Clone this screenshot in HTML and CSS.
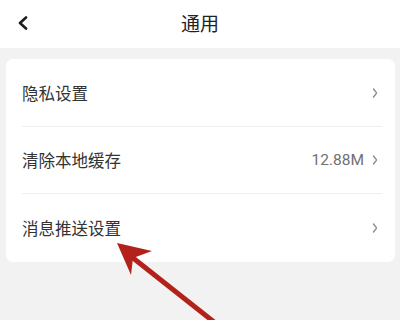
FILE: index.html
```html
<!DOCTYPE html>
<html lang="zh">
<head>
<meta charset="utf-8">
<link rel="stylesheet" href="styles.css">
</head>
<body>
<div class="page">
  <header class="topbar">
    <svg class="back" width="12" height="14" viewBox="0 0 12 14"><path d="M9 1.5 L3 7 L9 12.5" fill="none" stroke="#1e1e1e" stroke-width="2.6" stroke-linecap="round" stroke-linejoin="round"/></svg>
    <div class="title">通用</div>
  </header>
  <main class="content">
    <div class="card">
      <div class="row">
        <span class="label">隐私设置</span>
        <span class="right"><svg class="chev" width="6" height="10" viewBox="0 0 6 10"><path d="M1.5 1 Q4.5 4.5 4.5 5 Q4.5 5.5 1.5 9" fill="none" stroke="#8a8a8a" stroke-width="1.4" stroke-linecap="round"/></svg></span>
      </div>
      <div class="row">
        <span class="label">清除本地缓存</span>
        <span class="right"><span class="value">12.88M</span><svg class="chev" width="6" height="10" viewBox="0 0 6 10"><path d="M1.5 1 Q4.5 4.5 4.5 5 Q4.5 5.5 1.5 9" fill="none" stroke="#8a8a8a" stroke-width="1.4" stroke-linecap="round"/></svg></span>
      </div>
      <div class="row">
        <span class="label">消息推送设置</span>
        <span class="right"><svg class="chev" width="6" height="10" viewBox="0 0 6 10"><path d="M1.5 1 Q4.5 4.5 4.5 5 Q4.5 5.5 1.5 9" fill="none" stroke="#8a8a8a" stroke-width="1.4" stroke-linecap="round"/></svg></span>
      </div>
    </div>
  </main>
  <svg class="arrow" width="400" height="320" viewBox="0 0 400 320">
    <line x1="214" y1="322" x2="128" y2="254" stroke="#b3211b" stroke-width="5"/>
    <path d="M117 243 L152 251 L133 258 L131 275 Z" fill="#b3211b"/>
  </svg>
</div>
</body>
</html>
```
FILE: styles.css
```css
html, body {
  margin: 0;
  padding: 0;
}
body {
  width: 400px;
  height: 320px;
  overflow: hidden;
  background: #f2f2f2;
  font-family: "Noto Sans CJK SC", "Noto Sans", sans-serif;
}
.page {
  position: relative;
  width: 400px;
  height: 320px;
}
.topbar {
  position: relative;
  height: 48px;
  background: #ffffff;
  display: flex;
  align-items: center;
  justify-content: center;
}
.back {
  position: absolute;
  left: 17px;
  top: 16px;
}
.title {
  font-size: 19px;
  color: #222;
  line-height: 1;
  margin-top: -4px;
}
.content {
  padding: 11px 5px 0 6px;
}
.card {
  background: #fff;
  border-radius: 7px;
  padding: 0 13px 0 16px;
}
.row {
  height: 66px;
  display: flex;
  align-items: center;
  justify-content: space-between;
  border-bottom: 1px solid #efefef;
}
.row:first-child {
  height: 67px;
}
.row:last-child {
  border-bottom: none;
  height: 68px;
}
.label {
  font-size: 16.5px;
  color: #333;
  letter-spacing: 0;
}
.right {
  display: flex;
  align-items: center;
  gap: 8px;
}
.value {
  font-size: 15.5px;
  color: #707070;
  font-family: "Roboto", "Noto Sans", sans-serif;
}
.chev {
  display: block;
  margin-right: 4px;
}
.arrow {
  position: absolute;
  left: 0;
  top: 0;
  pointer-events: none;
}
```
